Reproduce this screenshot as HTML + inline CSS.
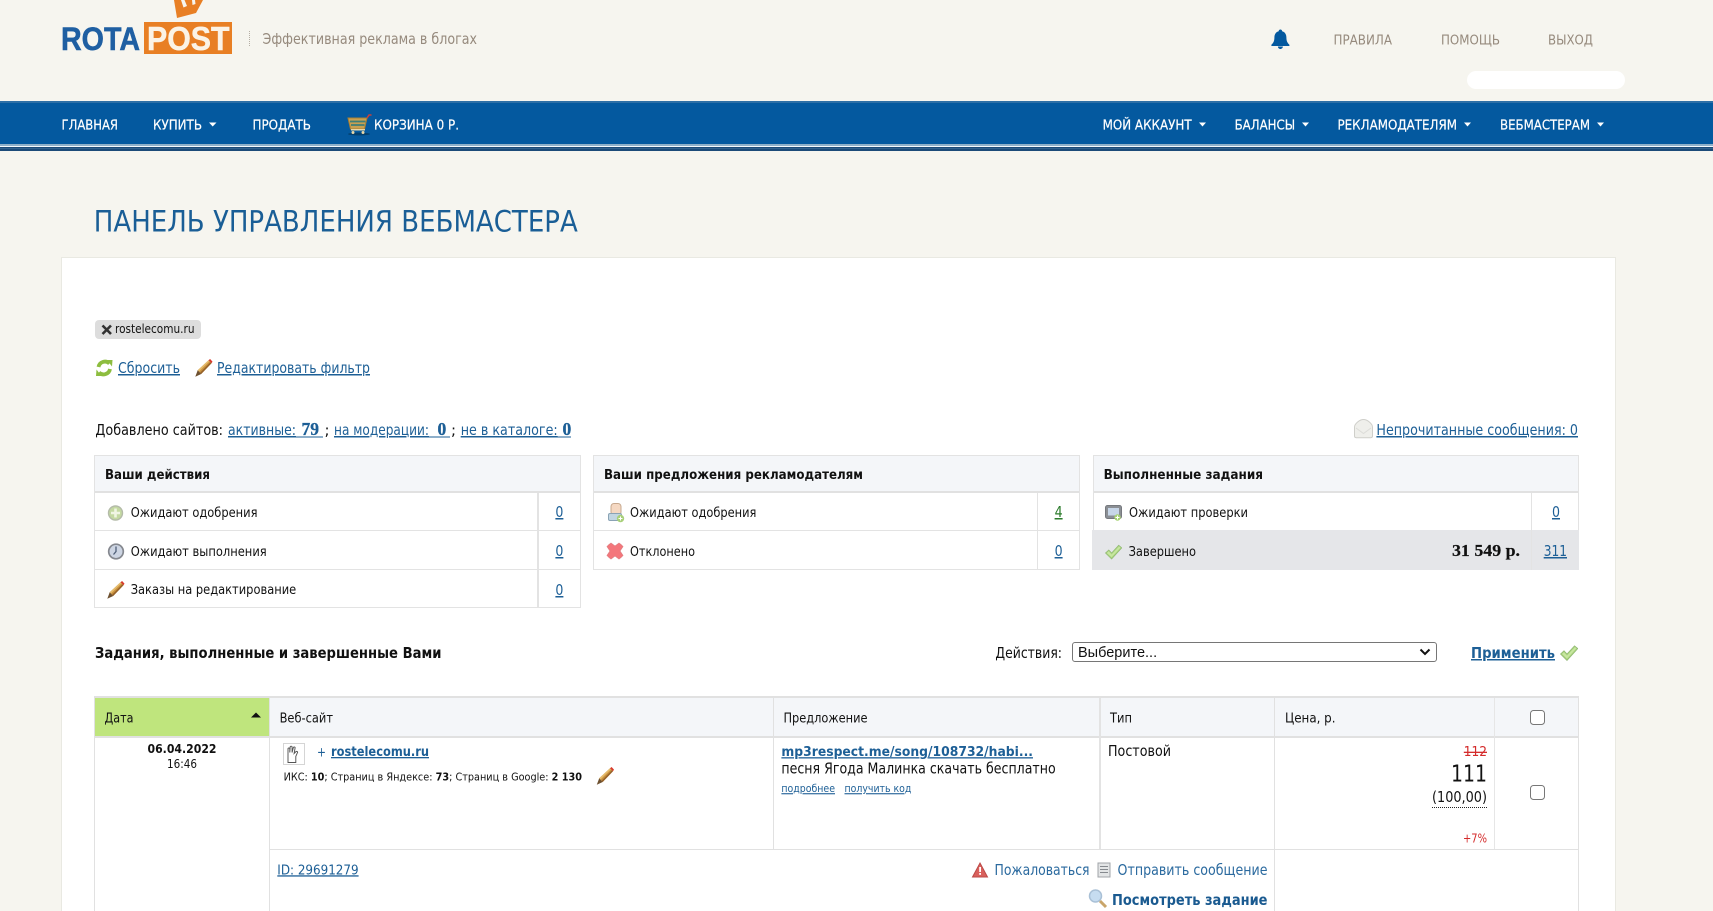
<!DOCTYPE html>
<html lang="ru"><head><meta charset="utf-8"><title>Панель управления вебмастера</title>
<style>
html,body{margin:0;padding:0;width:1713px;height:911px;overflow:hidden;background:#f6f5ef}
.b{position:absolute;box-sizing:border-box}
svg{position:absolute;left:0;top:0}
text{font-family:"DejaVu Sans","Liberation Sans",sans-serif;fill:#111}
a text,text.l{fill:#1d5f96}
.u{text-decoration:underline}
.bd{font-weight:bold}
.s{font-family:"Liberation Serif",serif;font-weight:bold}
.n{fill:#fff;font-size:13.5px;stroke:#fff;stroke-width:.2px}
.t{fill:#968a7d;font-size:13.5px}
input[type=checkbox]{position:absolute;margin:0;width:15px;height:15px;appearance:none;-webkit-appearance:none;box-sizing:border-box;background:#fff;border:1.4px solid #777;border-radius:3.500px}
select{position:absolute;left:1072px;top:642px;width:365px;height:20px;font:14.500px "Liberation Sans",sans-serif;background:#fff;border:1px solid #767676;border-radius:3px;padding:1px 5px 0;color:#111;appearance:none;-webkit-appearance:none}
</style></head><body>
<div class="b" style="left:0;top:101px;width:1713px;height:44px;background:#04599f;border-top:2px solid #2d6fa6"></div>
<div class="b" style="left:0;top:144px;width:1713px;height:1.500px;background:#8fb0c9"></div>
<div class="b" style="left:0;top:145.500px;width:1713px;height:1.500px;background:#f4f8fb"></div>
<div class="b" style="left:0;top:147px;width:1713px;height:4px;background:#1c4a78"></div>
<div class="b" style="left:0;top:148px;width:1713px;height:1px;background:#33628c"></div>
<div class="b" style="left:1467px;top:71px;width:158px;height:18px;background:#fff;border-radius:9px"></div>
<div class="b" style="left:61px;top:257px;width:1555px;height:654px;background:#fff;border:1px solid #e9e9e2;border-bottom:0"></div>
<div class="b" style="left:95px;top:320px;width:106px;height:19px;background:#ddd;border-radius:4px"></div>

<!-- table 1 -->
<div class="b" style="left:94px;top:455px;width:487px;height:153px;border:2px solid #e3e3e3;border-width:1px"></div>
<div class="b" style="left:95px;top:456px;width:485px;height:35px;background:#f4f6f9"></div>
<div class="b" style="left:95px;top:491px;width:485px;height:2px;background:#e1e1e1"></div>
<div class="b" style="left:95px;top:530px;width:485px;height:1px;background:#e3e3e3"></div>
<div class="b" style="left:95px;top:569px;width:485px;height:1px;background:#e3e3e3"></div>
<div class="b" style="left:537px;top:493px;width:2px;height:115px;background:#e3e3e3"></div>
<!-- table 2 -->
<div class="b" style="left:593px;top:455px;width:487px;height:115px;border:1px solid #e3e3e3"></div>
<div class="b" style="left:594px;top:456px;width:485px;height:35px;background:#f4f6f9"></div>
<div class="b" style="left:594px;top:491px;width:485px;height:2px;background:#e1e1e1"></div>
<div class="b" style="left:594px;top:530px;width:485px;height:1px;background:#e3e3e3"></div>
<div class="b" style="left:1037px;top:493px;width:1px;height:77px;background:#e3e3e3"></div>
<!-- table 3 -->
<div class="b" style="left:1093px;top:455px;width:486px;height:115px;border:1px solid #e3e3e3"></div>
<div class="b" style="left:1094px;top:456px;width:484px;height:35px;background:#f4f6f9"></div>
<div class="b" style="left:1094px;top:491px;width:484px;height:2px;background:#e1e1e1"></div>
<div class="b" style="left:1092px;top:530px;width:487px;height:40px;background:#e5e6e9"></div>
<div class="b" style="left:1531px;top:493px;width:1px;height:77px;background:#e3e3e3"></div>

<!-- main table -->
<div class="b" style="left:95px;top:698px;width:1484px;height:38px;background:#f4f6f9"></div>
<div class="b" style="left:95px;top:698px;width:174px;height:38px;background:#bfe57d"></div>
<div class="b" style="left:94px;top:696px;width:1485px;height:2px;background:#e1e1e1"></div>
<div class="b" style="left:94px;top:736px;width:1485px;height:2px;background:#e1e1e1"></div>
<div class="b" style="left:94px;top:696px;width:1px;height:215px;background:#e1e1e1"></div>
<div class="b" style="left:269px;top:698px;width:1px;height:213px;background:#e1e1e1"></div>
<div class="b" style="left:773px;top:698px;width:1px;height:151px;background:#e1e1e1"></div>
<div class="b" style="left:1099px;top:698px;width:2px;height:151px;background:#e3e3e3"></div>
<div class="b" style="left:1274px;top:698px;width:1px;height:213px;background:#e1e1e1"></div>
<div class="b" style="left:1494px;top:698px;width:1px;height:151px;background:#e6e6e6"></div>
<div class="b" style="left:1578px;top:696px;width:1px;height:215px;background:#e1e1e1"></div>
<div class="b" style="left:269px;top:849px;width:1310px;height:1px;background:#e1e1e1"></div>
<div class="b" style="left:283px;top:743px;width:22px;height:22px;border:1px solid #d5d5d5;background:#fff"></div>

<svg width="1713" height="911" viewBox="0 0 1713 911" xmlns="http://www.w3.org/2000/svg">
<defs>
<symbol id="pencil" viewBox="0 0 18 18"><polygon points="3.2,11.300 14,1.300 17,4.300 6.700,15" fill="#c9923e"/><polygon points="3.2,11.300 14,1.300 15,2.400 4.400,12.600" fill="#e5bb6c"/><polygon points="5.600,13.800 15.900,3.200 17,4.300 6.700,15" fill="#96622a"/><polygon points="0.800,17.700 3.200,11.300 6.700,15" fill="#6d5030"/><polygon points="14,1.300 15.600,0 18,2.600 17,4.300" fill="#d8392b"/></symbol>
<symbol id="check" viewBox="0 0 18 16"><polygon points="0.5,9 4,5.800 7,9 14.500,0.800 17.800,3.600 7,15.500" fill="#a9d37c" stroke="#8eb573" stroke-width=".7"/><polygon points="2,9 4,7.200 7,10.600 15,2 16.400,3.400 7,13.600" fill="#c7e6a0"/></symbol>
</defs>

<!-- logo -->
<polygon points="174,0 203,0 196,13 177,18" fill="#e87f24"/>
<polygon points="181,0 184.500,0 187,6 183.500,7.500" fill="#f6f5ef"/><polygon points="192,0 195,0 195.500,4 192.500,5" fill="#f6f5ef"/>
<text x="61" y="50" font-size="32" class="bd" textLength="79" lengthAdjust="spacingAndGlyphs" style="font-family:'Liberation Sans';fill:#1f5fa2;stroke:#1f5fa2;stroke-width:.5px">ROTA</text>
<rect x="144" y="22" width="88" height="32" fill="#e87f24"/>
<text x="147" y="50" font-size="33" class="bd" textLength="82.500" lengthAdjust="spacingAndGlyphs" style="font-family:'Liberation Sans';fill:#fbf3e6;stroke:#fbf3e6;stroke-width:.5px">POST</text>
<line x1="249.500" y1="31" x2="249.500" y2="47" stroke="#b5aea4" stroke-dasharray="1 1"/>
<text x="262.500" y="44" font-size="15" textLength="214.500" lengthAdjust="spacingAndGlyphs" style="fill:#968a7d">Эффективная реклама в блогах</text>

<!-- bell -->
<path d="M1281 29.500c1 0 1.700.8 1.700 1.700 3 .8 4.300 3.300 4.300 6.300 0 4 1.300 5.500 3 7.300v1.200h-18v-1.200c1.700-1.800 3-3.300 3-7.300 0-3 1.300-5.500 4.300-6.300 0-.9.700-1.700 1.700-1.700zm-2.500 17h5c0 1.300-1.100 2.500-2.500 2.500s-2.500-1.200-2.500-2.500z" fill="#04599f" transform="translate(-.6 0)"/>
<a href="#"><text class="t" x="1333.500" y="44.500" textLength="58.500" lengthAdjust="spacingAndGlyphs" style="fill:#968a7d">ПРАВИЛА</text></a>
<a href="#"><text class="t" x="1441" y="44.500" textLength="59" lengthAdjust="spacingAndGlyphs" style="fill:#968a7d">ПОМОЩЬ</text></a>
<a href="#"><text class="t" x="1548" y="44.500" textLength="45" lengthAdjust="spacingAndGlyphs" style="fill:#968a7d">ВЫХОД</text></a>

<!-- nav -->
<g>
<a href="#"><text class="n" x="61.500" y="129.300" textLength="56.500" lengthAdjust="spacingAndGlyphs" style="fill:#fff">ГЛАВНАЯ</text></a>
<a href="#"><text class="n" x="153" y="129.300" textLength="49" lengthAdjust="spacingAndGlyphs" style="fill:#fff">КУПИТЬ</text></a>
<polygon points="209,122.500 216.500,122.500 212.700,126.500" fill="#fff"/>
<a href="#"><text class="n" x="252.500" y="129.300" textLength="58.500" lengthAdjust="spacingAndGlyphs" style="fill:#fff">ПРОДАТЬ</text></a>
<a href="#"><text class="n" x="374" y="129.300" textLength="85" lengthAdjust="spacingAndGlyphs" style="fill:#fff">КОРЗИНА 0 Р.</text></a>
<a href="#"><text class="n" x="1102.600" y="129.300" textLength="89" lengthAdjust="spacingAndGlyphs" style="fill:#fff">МОЙ АККАУНТ</text></a>
<polygon points="1199,122.500 1206,122.500 1202.500,126.500" fill="#fff"/>
<a href="#"><text class="n" x="1234.600" y="129.300" textLength="60.500" lengthAdjust="spacingAndGlyphs" style="fill:#fff">БАЛАНСЫ</text></a>
<polygon points="1302,122.500 1309,122.500 1305.500,126.500" fill="#fff"/>
<a href="#"><text class="n" x="1337.500" y="129.300" textLength="119.500" lengthAdjust="spacingAndGlyphs" style="fill:#fff">РЕКЛАМОДАТЕЛЯМ</text></a>
<polygon points="1464,122.500 1471,122.500 1467.500,126.500" fill="#fff"/>
<a href="#"><text class="n" x="1500" y="129.300" textLength="90" lengthAdjust="spacingAndGlyphs" style="fill:#fff">ВЕБМАСТЕРАМ</text></a>
<polygon points="1597,122.500 1604,122.500 1600.500,126.500" fill="#fff"/>
</g>
<!-- cart -->
<g>
<ellipse cx="359" cy="134" rx="11" ry="1.500" fill="#03406f"/>
<path d="M348 118h19l-2.500 11h-14z" fill="#c8a052" stroke="#a97f32"/>
<path d="M350 121.500h15.500M351 125h13.500" stroke="#3f7f78" stroke-width="1.700"/>
<path d="M367 118l2-3h2.500" stroke="#c9403a" stroke-width="1.500" fill="none"/>
<rect x="351" y="129" width="14" height="1.500" fill="#e8d7a8"/>
<circle cx="353" cy="132.500" r="1.500" fill="#e8d7a8"/><circle cx="363" cy="132.500" r="1.500" fill="#e8d7a8"/>
</g>

<text x="93.800" y="231.700" font-size="29" textLength="484" lengthAdjust="spacingAndGlyphs" style="fill:#1a5e96">ПАНЕЛЬ УПРАВЛЕНИЯ ВЕБМАСТЕРА</text>

<!-- filter -->
<path d="M102.500 325.500l8.500 8.500M111 325.500l-8.500 8.500" stroke="#333" stroke-width="2.600"/>
<text x="115" y="333" font-size="12" textLength="79.500" lengthAdjust="spacingAndGlyphs">rostelecomu.ru</text>
<g fill="none" stroke="#8dbd3f" stroke-width="3.800"><path d="M98.500 367a6.500 6.500 0 0 1 11-3.500"/><path d="M110 369a6.500 6.500 0 0 1-11 3.500"/></g>
<polygon points="107,360 112.500,360 112,366.500" fill="#8dbd3f"/><polygon points="96,376 101.500,376 96.500,369.500" fill="#8dbd3f"/>
<a href="#"><text class="l u" x="118" y="373" font-size="15" textLength="62" lengthAdjust="spacingAndGlyphs" style="fill:#1d5f96">Сбросить</text></a>
<use href="#pencil" x="194.500" y="359" width="18" height="18"/>
<a href="#"><text class="l u" x="217" y="373" font-size="15" textLength="153" lengthAdjust="spacingAndGlyphs" style="fill:#1d5f96">Редактировать фильтр</text></a>

<text x="95.400" y="435" font-size="15" textLength="127.600" lengthAdjust="spacingAndGlyphs">Добавлено сайтов:</text>
<a href="#"><text class="u" x="228" y="435" font-size="15" textLength="68" lengthAdjust="spacingAndGlyphs" style="fill:#1d5f96">активные:</text></a>
<text class="s" x="301.500" y="435" font-size="17.500" style="fill:#1d5f96;stroke:#1d5f96;stroke-width:.3px">79</text>
<rect x="296" y="436.500" width="27" height="1" fill="#1d5f96"/>
<text x="324.500" y="435" font-size="15">;</text>
<a href="#"><text class="u" x="334" y="435" font-size="15" textLength="95" lengthAdjust="spacingAndGlyphs" style="fill:#1d5f96">на модерации:</text></a>
<text class="s" x="437.500" y="435" font-size="17.500" style="fill:#1d5f96;stroke:#1d5f96;stroke-width:.3px">0</text>
<rect x="429" y="436.500" width="21" height="1" fill="#1d5f96"/>
<text x="451" y="435" font-size="15">;</text>
<a href="#"><text class="u" x="460.700" y="435" font-size="15" textLength="97" lengthAdjust="spacingAndGlyphs" style="fill:#1d5f96">не в каталоге:</text></a>
<text class="s" x="562.500" y="435" font-size="17.500" style="fill:#1d5f96;stroke:#1d5f96;stroke-width:.3px">0</text>
<rect x="557" y="436.500" width="14" height="1" fill="#1d5f96"/>

<path d="M1354.500 427c0-3 5-7.500 9-7.500s9 4.500 9 7.500v9c0 1-.7 1.700-1.700 1.700h-14.600c-1 0-1.700-.7-1.700-1.700z" fill="#efefeb" stroke="#cfcfca"/><path d="M1356 428l7.500 5.500 7.500-5.500" fill="none" stroke="#dcdcd8"/>
<a href="#"><text class="u" x="1376.400" y="435" font-size="15" textLength="201.600" lengthAdjust="spacingAndGlyphs" style="fill:#1d5f96">Непрочитанные сообщения: 0</text></a>

<!-- stat tables text -->
<text class="bd" x="105" y="479.200" font-size="13" textLength="105" lengthAdjust="spacingAndGlyphs">Ваши действия</text>
<text class="bd" x="604" y="479.200" font-size="13" textLength="259" lengthAdjust="spacingAndGlyphs">Ваши предложения рекламодателям</text>
<text class="bd" x="1103.600" y="479.200" font-size="13" textLength="159.400" lengthAdjust="spacingAndGlyphs">Выполненные задания</text>

<text x="130.700" y="517" font-size="13" textLength="126.800" lengthAdjust="spacingAndGlyphs">Ожидают одобрения</text>
<text x="130.700" y="556" font-size="13" textLength="136" lengthAdjust="spacingAndGlyphs">Ожидают выполнения</text>
<text x="130.700" y="594" font-size="13" textLength="165.500" lengthAdjust="spacingAndGlyphs">Заказы на редактирование</text>
<a href="#"><text class="u" x="555.400" y="517" font-size="15" textLength="8" lengthAdjust="spacingAndGlyphs" style="fill:#1d5f96">0</text></a>
<a href="#"><text class="u" x="555.400" y="556" font-size="15" textLength="8" lengthAdjust="spacingAndGlyphs" style="fill:#1d5f96">0</text></a>
<a href="#"><text class="u" x="555.400" y="595" font-size="15" textLength="8" lengthAdjust="spacingAndGlyphs" style="fill:#1d5f96">0</text></a>

<text x="630" y="517" font-size="13" textLength="126.400" lengthAdjust="spacingAndGlyphs">Ожидают одобрения</text>
<text x="630" y="556" font-size="13" textLength="65" lengthAdjust="spacingAndGlyphs">Отклонено</text>
<a href="#"><text class="u" x="1054.600" y="517" font-size="15" textLength="8" lengthAdjust="spacingAndGlyphs" style="fill:#2a7a2a">4</text></a>
<a href="#"><text class="u" x="1054.600" y="556" font-size="15" textLength="8" lengthAdjust="spacingAndGlyphs" style="fill:#1d5f96">0</text></a>

<text x="1129" y="517" font-size="13" textLength="119" lengthAdjust="spacingAndGlyphs">Ожидают проверки</text>
<text x="1128.600" y="556" font-size="13" textLength="67.400" lengthAdjust="spacingAndGlyphs">Завершено</text>
<text class="s" x="1452" y="556" font-size="16.500" textLength="68" lengthAdjust="spacingAndGlyphs" style="stroke:#111;stroke-width:.2px">31 549 р.</text>
<a href="#"><text class="u" x="1552" y="517" font-size="15" textLength="8" lengthAdjust="spacingAndGlyphs" style="fill:#1d5f96">0</text></a>
<a href="#"><text class="u" x="1543.700" y="556" font-size="15" textLength="23.300" lengthAdjust="spacingAndGlyphs" style="fill:#1d5f96">311</text></a>

<!-- stat icons -->
<circle cx="115.500" cy="513" r="7" fill="#c4d9a2" stroke="#b4bba9" stroke-width="1.400"/><path d="M115.500 508.500v9M111 513h9" stroke="#f0f5e3" stroke-width="2.600"/>
<circle cx="116" cy="551.500" r="7.300" fill="#cdd5e3" stroke="#85888f" stroke-width="1.700"/><path d="M116 546.500v5l-2.500 3" stroke="#4f5f78" stroke-width="1.300" fill="none"/>
<use href="#pencil" x="106.500" y="581" width="18" height="18"/>
<rect x="611" y="503.500" width="10" height="11.500" rx="3" fill="#f5d8c2" stroke="#c7a88e"/>
<rect x="608.500" y="513.500" width="13" height="7" rx="1.500" fill="#c2d6e2" stroke="#8aa3b5"/><circle cx="620.500" cy="518.500" r="3.700" fill="#a8d07a"/><path d="M620.500 516.500v4M618.500 518.500h4" stroke="#fff"/>
<path d="M609 544.500l2-1.500 4 3 4-3 2 1.500 2 2-3 4.500 3 4.500-2 2-2 1.500-4-3-4 3-2-1.500-2-2 3-4.500-3-4.500z" fill="#f4767b" stroke="#e07f82" stroke-width=".7"/>
<rect x="1105.500" y="505.500" width="16" height="13" rx="2" fill="#8b8f94" stroke="#76797e"/><rect x="1108" y="508" width="11" height="7.500" fill="#c7d6e8"/><circle cx="1117.500" cy="517.500" r="3.200" fill="#a6d272"/><path d="M1117.500 515.500v4M1115.500 517.500h4" stroke="#fff"/>
<use href="#check" x="1105" y="544" width="17" height="16"/>

<!-- section -->
<text class="bd" x="95" y="658" font-size="15" textLength="346.500" lengthAdjust="spacingAndGlyphs">Задания, выполненные и завершенные Вами</text>
<text x="995.400" y="658" font-size="15" textLength="66.600" lengthAdjust="spacingAndGlyphs">Действия:</text>
<a href="#"><text class="bd u" x="1471" y="658" font-size="15" textLength="84" lengthAdjust="spacingAndGlyphs" style="fill:#1d5f96">Применить</text></a>
<use href="#check" x="1560" y="645" width="18" height="16"/>

<!-- main table text -->
<text x="104.500" y="722.500" font-size="13" textLength="29" lengthAdjust="spacingAndGlyphs">Дата</text>
<polygon points="251,717.500 261,717.500 256,712.500" fill="#111"/>
<text x="279.600" y="722.500" font-size="13" textLength="53.400" lengthAdjust="spacingAndGlyphs">Веб-сайт</text>
<text x="783.500" y="722.500" font-size="13" textLength="84" lengthAdjust="spacingAndGlyphs">Предложение</text>
<text x="1110" y="722.500" font-size="13" textLength="22" lengthAdjust="spacingAndGlyphs">Тип</text>
<text x="1285" y="722.500" font-size="13" textLength="50.500" lengthAdjust="spacingAndGlyphs">Цена, р.</text>

<text class="bd" x="147.500" y="753" font-size="12.500" textLength="69" lengthAdjust="spacingAndGlyphs">06.04.2022</text>
<text x="167" y="768" font-size="12" textLength="30" lengthAdjust="spacingAndGlyphs">16:46</text>

<g transform="translate(288 746.500) scale(1.2) translate(-291 -749.500)"><path d="M291 758v-6.500c0-1 1.500-1 1.500 0v3l.3-4.500c0-1 1.600-1 1.600 0v4.500l1-4c.3-1 1.700-.7 1.500.3l-.8 4.500 1.500-1.500c.8-.7 1.800.2 1.200 1l-1.300 3v5h-6.500z" fill="#fff" stroke="#555" stroke-width=".8"/></g>
<text x="317" y="756.500" font-size="13" textLength="9" lengthAdjust="spacingAndGlyphs" style="fill:#1d5f96">+</text>
<a href="#"><text class="bd u" x="331" y="756" font-size="13" textLength="98" lengthAdjust="spacingAndGlyphs" style="fill:#1d5f96">rostelecomu.ru</text></a>
<text x="283.600" y="780.700" font-size="11" textLength="298.400" lengthAdjust="spacingAndGlyphs">ИКС: <tspan class="bd">10</tspan>; Страниц в Яндексе: <tspan class="bd">73</tspan>; Страниц в Google: <tspan class="bd">2 130</tspan></text>
<use href="#pencil" x="596" y="767" width="18" height="18"/>

<a href="#"><text class="bd u" x="781.400" y="756.200" font-size="13" textLength="251.600" lengthAdjust="spacingAndGlyphs" style="fill:#1d5f96">mp3respect.me/song/108732/habi...</text></a>
<text x="781.400" y="773.500" font-size="15" textLength="274.300" lengthAdjust="spacingAndGlyphs">песня Ягода Малинка скачать бесплатно</text>
<a href="#"><text class="u" x="781.400" y="792.200" font-size="11" textLength="53.600" lengthAdjust="spacingAndGlyphs" style="fill:#1d5f96">подробнее</text></a>
<a href="#"><text class="u" x="844.500" y="792.200" font-size="11" textLength="66.900" lengthAdjust="spacingAndGlyphs" style="fill:#1d5f96">получить код</text></a>
<text x="1108" y="756" font-size="15" textLength="63" lengthAdjust="spacingAndGlyphs">Постовой</text>

<text x="1463.800" y="756" font-size="13" textLength="23.200" lengthAdjust="spacingAndGlyphs" style="fill:#d42a2a;text-decoration:line-through">112</text>
<text x="1451" y="781.700" font-size="23" textLength="36" lengthAdjust="spacingAndGlyphs">111</text>
<text x="1432" y="802" font-size="15" textLength="55" lengthAdjust="spacingAndGlyphs">(100,00)</text>
<line x1="1432" y1="807.500" x2="1487" y2="807.500" stroke="#222" stroke-dasharray="1 1"/>
<text x="1463" y="842.500" font-size="12" textLength="24" lengthAdjust="spacingAndGlyphs" style="fill:#d42a2a">+7%</text>

<a href="#"><text class="u" x="277.300" y="874.300" font-size="13" textLength="81.300" lengthAdjust="spacingAndGlyphs" style="fill:#1d5f96">ID: 29691279</text></a>
<path d="M980 863l7.500 14h-15z" fill="#d9605c" stroke="#bb4a47"/><rect x="979.200" y="867" width="1.800" height="5" fill="#fff"/><rect x="979.200" y="873" width="1.800" height="1.800" fill="#fff"/>
<text x="994.500" y="875" font-size="15" textLength="95" lengthAdjust="spacingAndGlyphs" style="fill:#2b6a9f">Пожаловаться</text>
<rect x="1098" y="863" width="12" height="14" fill="#e3e5e6" stroke="#a0a4a8"/><path d="M1100 866.500h8M1100 869.500h8M1100 872.500h8" stroke="#85898e"/>
<text x="1117.500" y="875" font-size="15" textLength="150" lengthAdjust="spacingAndGlyphs" style="fill:#2b6a9f">Отправить сообщение</text>
<circle cx="1095.500" cy="896" r="6" fill="#c6dcf0" stroke="#a9c0d6" stroke-width="1.500"/><path d="M1100 901l6 6" stroke="#c9a56a" stroke-width="3"/>
<a href="#"><text class="bd" x="1112" y="905" font-size="15" textLength="155.500" lengthAdjust="spacingAndGlyphs" style="fill:#1a5a90">Посмотреть задание</text></a>
</svg>

<select><option>Выберите...</option></select>
<svg style="left:1418px;top:647px" width="14" height="10" viewBox="0 0 14 10"><path d="M2.500 2.500L7 7l4.500-4.500" fill="none" stroke="#111" stroke-width="2"/></svg>
<input type="checkbox" style="left:1530px;top:710px">
<input type="checkbox" style="left:1530px;top:785px">
</body></html>
